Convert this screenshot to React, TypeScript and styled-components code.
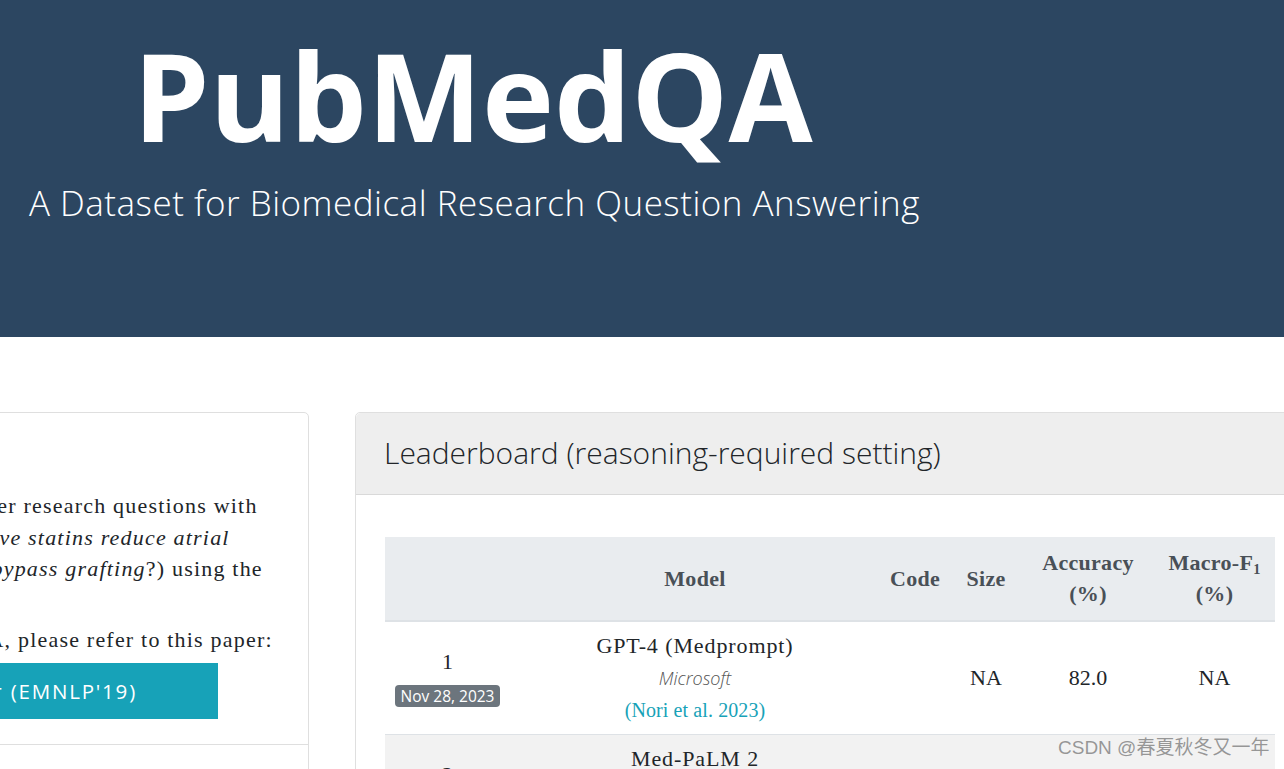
import styled, { createGlobalStyle } from 'styled-components'

const GlobalStyle = createGlobalStyle`
  html, body {
    margin: 0;
    padding: 0;
    background: #fff;
    overflow: hidden;
  }
  body {
    font-family: 'Liberation Serif', serif;
    color: #212529;
  }
`

const leaderboard = [
  {
    rank: 1,
    date: 'Nov 28, 2023',
    model: 'GPT-4 (Medprompt)',
    org: 'Microsoft',
    ref: '(Nori et al. 2023)',
    size: 'NA',
    acc: '82.0',
    f1: 'NA',
  },
  {
    rank: 2,
    date: 'May 16, 2023',
    model: 'Med-PaLM 2',
    org: 'Google',
    ref: '(Singhal et al. 2023)',
    size: 'NA',
    acc: '81.8',
    f1: 'NA',
  },
]

const App = () => {
  return (
    <Page>
      <GlobalStyle />
      <Hero>
        <Title>PubMedQA</Title>
        <Subtitle>A Dataset for Biomedical Research Question Answering</Subtitle>
      </Hero>

      <Main>
        <InfoCard>
          <InfoBody>
            <InfoHeading>What is PubMedQA?</InfoHeading>
            <Lead>
              The task of PubMedQA is to answer research questions with
              <br />
              yes/no/maybe (e.g.: <em>Do preoperative statins reduce atrial</em>
              <br />
              <em>fibrillation after coronary artery bypass grafting</em>?) using the
              <br />
              corresponding abstracts.
            </Lead>
            <Lead $gap>For more details about PubMedQA, please refer to this paper:</Lead>
            <ButtonRow>
              <PaperButton>PubMedQA Paper (EMNLP'19)</PaperButton>
            </ButtonRow>
          </InfoBody>
          <InfoSection>
            <InfoHeading>Getting Started</InfoHeading>
          </InfoSection>
        </InfoCard>

        <BoardCard>
          <BoardHeader>Leaderboard (reasoning-required setting)</BoardHeader>
          <BoardBody>
            <Table>
              <colgroup>
                <col style={{ width: 125 }} />
                <col style={{ width: 370 }} />
                <col style={{ width: 70 }} />
                <col style={{ width: 72 }} />
                <col style={{ width: 132 }} />
                <col style={{ width: 121 }} />
              </colgroup>
              <thead>
                <tr>
                  <Th />
                  <Th>Model</Th>
                  <Th>Code</Th>
                  <Th>Size</Th>
                  <Th>
                    Accuracy
                    <br />
                    (%)
                  </Th>
                  <Th>
                    Macro-F<sub>1</sub>
                    <br />
                    (%)
                  </Th>
                </tr>
              </thead>
              <tbody>
                {leaderboard.map((row, i) => (
                  <Row key={row.rank} $striped={i % 2 === 1}>
                    <Td>
                      {row.rank}
                      <br />
                      <DateBadge>{row.date}</DateBadge>
                    </Td>
                    <Td>
                      <ModelName>{row.model}</ModelName>
                      <Org>{row.org}</Org>
                      <RefLink href="#">{row.ref}</RefLink>
                    </Td>
                    <Td />
                    <Td>{row.size}</Td>
                    <Td>{row.acc}</Td>
                    <Td>{row.f1}</Td>
                  </Row>
                ))}
              </tbody>
            </Table>
          </BoardBody>
        </BoardCard>
      </Main>

      <Watermark>CSDN @春夏秋冬又一年</Watermark>
    </Page>
  )
}

const Page = styled.div`
  position: relative;
  width: 100vw;
  height: 100vh;
  overflow: hidden;
`

const Hero = styled.header`
  background: #2c4661;
  height: 337px;
  box-sizing: border-box;
  padding-top: 22px;
  color: #fff;
  font-family: 'Open Sans', sans-serif;
`

const Title = styled.h1`
  margin: 0;
  padding-left: 133px;
  font-size: 122px;
  font-weight: 700;
  line-height: 1.2;
`

const Subtitle = styled.p`
  margin: 14px 0 0;
  padding-left: 29px;
  font-size: 35px;
  font-weight: 300;
  line-height: 1.2;
  letter-spacing: 0.5px;
`

const Main = styled.main`
  display: flex;
  align-items: flex-start;
  gap: 46px;
  margin-left: -364px;
  padding-top: 75px;
`

const InfoCard = styled.section`
  flex-shrink: 0;
  width: 673px;
  box-sizing: border-box;
  border: 1px solid #dfdfdf;
  border-radius: 5px;
  background: #fff;
`

const InfoBody = styled.div`
  padding: 20px 20px 25px;
`

const InfoHeading = styled.h2`
  margin: 0 0 17px;
  font-family: 'Open Sans', sans-serif;
  font-weight: 300;
  font-size: 30px;
  line-height: 40px;
  white-space: nowrap;
`

const Lead = styled.p<{ $gap?: boolean }>`
  margin: ${(p) => (p.$gap ? '8px' : '0')} 0 0;
  font-size: 22px;
  line-height: 31.5px;
  letter-spacing: 1.2px;
  white-space: nowrap;
`

const ButtonRow = styled.div`
  margin-top: 7px;
  text-align: center;
`

const PaperButton = styled.a`
  display: inline-block;
  width: 490px;
  box-sizing: border-box;
  padding: 13px 16px;
  background: #17a2b8;
  color: #fff;
  font-family: 'Open Sans', sans-serif;
  font-size: 20.5px;
  line-height: 30px;
  letter-spacing: 1.8px;
  text-align: center;
  white-space: nowrap;
  text-decoration: none;
`

const InfoSection = styled.div`
  border-top: 1px solid #dfdfdf;
  padding: 20px;
`

const BoardCard = styled.section`
  flex-shrink: 0;
  width: 950px;
  box-sizing: border-box;
  border: 1px solid #dfdfdf;
  border-radius: 5px;
  background: #fff;
`

const BoardHeader = styled.h2`
  margin: 0;
  padding: 21px 28px 22px;
  background: #eeeeee;
  border-bottom: 1px solid #d9d9d9;
  border-radius: 5px 5px 0 0;
  font-family: 'Open Sans', sans-serif;
  font-weight: 300;
  font-size: 30px;
  line-height: 38px;
  color: #212529;
`

const BoardBody = styled.div`
  padding: 42px 29px 30px;
`

const Table = styled.table`
  width: 890px;
  table-layout: fixed;
  border-collapse: collapse;
  font-size: 22px;
  text-align: center;
`

const Th = styled.th`
  background: #e9ecef;
  border-bottom: 2px solid #dee2e6;
  padding: 10px 6px 11px;
  line-height: 31px;
  font-weight: 700;
  letter-spacing: 0.3px;
  color: #495057;
  vertical-align: middle;

  sub {
    font-size: 65%;
    line-height: 0;
    vertical-align: -0.25em;
  }
`

const Row = styled.tr<{ $striped?: boolean }>`
  background: ${(p) => (p.$striped ? '#f2f2f2' : '#fff')};
  border-top: 1px solid #dee2e6;
`

const Td = styled.td`
  padding: 8px 6px;
  line-height: 32px;
  vertical-align: middle;
  white-space: nowrap;
`

const DateBadge = styled.span`
  display: inline-block;
  padding: 0 6px;
  border-radius: 4px;
  background: #6c757d;
  color: #fff;
  font-family: 'Open Sans', sans-serif;
  font-size: 15.5px;
  line-height: 22px;
  vertical-align: middle;
`

const ModelName = styled.div`
  letter-spacing: 0.9px;
`

const Org = styled.div`
  font-family: 'Open Sans', sans-serif;
  font-style: italic;
  font-weight: 300;
  font-size: 18px;
  color: #555;
`

const RefLink = styled.a`
  display: block;
  color: #17a2b8;
  font-size: 20px;
  letter-spacing: 0.1px;
  text-decoration: none;
`

const Watermark = styled.div`
  position: absolute;
  left: 1058px;
  top: 736px;
  font-family: 'Liberation Sans', 'Noto Sans CJK SC', sans-serif;
  font-size: 19px;
  line-height: 24px;
  color: rgba(120, 120, 120, 0.75);
  white-space: nowrap;
  pointer-events: none;
`

export default App
